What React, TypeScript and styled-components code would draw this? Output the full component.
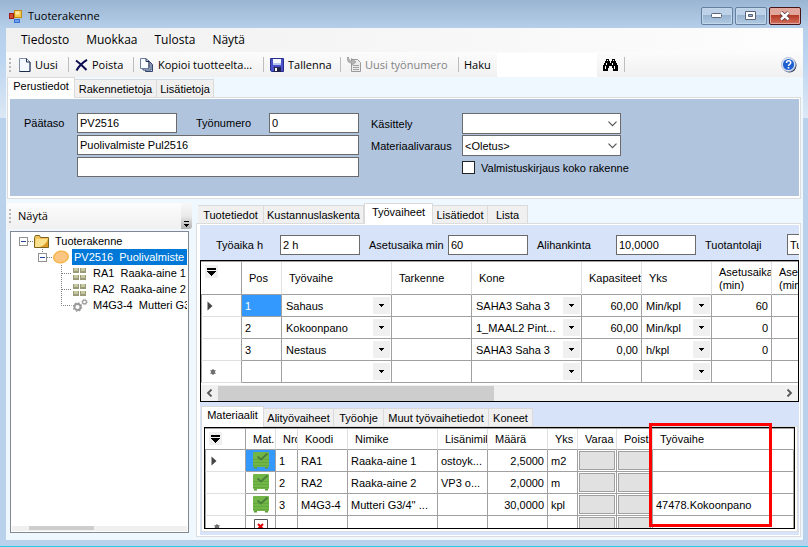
import React from 'react';
import styled, { createGlobalStyle, css } from 'styled-components';

const UI = '"Liberation Sans", Arial, sans-serif';
const CHROME = '"Open Sans", "Noto Sans", sans-serif';

const GlobalStyle = createGlobalStyle`
  *, *::before, *::after { box-sizing: border-box; }
  body { margin: 0; }
  button, input, select { font: inherit; color: inherit; margin: 0; }
  svg { display: block; flex: none; }
`;

const Window = styled.div`
  display: flex;
  flex-direction: column;
  height: 100vh;
  padding: 0 5px 6px 6px;
  overflow: hidden;
  border-bottom: 1px solid #1fd0e8;
  background:
    linear-gradient(#9ab5d2 0, #b5cee9 28px, #bcd5f0 60px, #dce8f5 118px) top / 100% 118px no-repeat,
    #b9d1ea;
  font: 11px/16px ${UI};
  color: #000;
`;

/* Title bar */
const TitleBar = styled.header`
  display: flex;
  flex: none;
  align-items: center;
  height: 28px;
  padding: 4px 2px 0 3px;
  gap: 6px;
  font: 11px/16px ${CHROME};
`;
const Title = styled.h1`
  flex: 1;
  margin: 0;
  font: inherit;
`;
const Caption = styled.div`
  display: flex;
  gap: 2px;
`;
const CaptionButton = styled.button<{ $close?: boolean }>`
  display: flex;
  align-items: center;
  justify-content: center;
  width: 32px;
  height: 18px;
  padding: 0;
  border: 1px solid ${p => (p.$close ? '#431418' : '#657fa0')};
  border-radius: 2px;
  box-shadow: inset 0 0 0 1px ${p => (p.$close ? '#e3a79d' : '#c3d7ea')};
  background: ${p =>
    p.$close
      ? 'linear-gradient(#e2a79c 0 45%, #b53a24 46%, #d2705c)'
      : 'linear-gradient(#bdd2e8 0 45%, #98b4d0 46%, #b2cae4)'};
`;

const Client = styled.main`
  display: flex;
  flex: 1;
  flex-direction: column;
  min-height: 0;
  background: #f0f8ff;
`;

/* Menu and toolbar */
const MenuBar = styled.nav`
  display: flex;
  flex: none;
  align-items: center;
  gap: 17px;
  height: 24px;
  padding-left: 15px;
  background: linear-gradient(90deg, #f0f0f0, #fdfdfd);
  font: 12px/16px ${CHROME};
`;
const MenuItem = styled.button`
  padding: 0;
  border: 0;
  background: none;
`;
const Toolbar = styled.div`
  display: flex;
  flex: none;
  align-items: center;
  height: 25px;
  padding: 0 6px 0 3px;
  background: linear-gradient(#fcfcfc, #f0f0f0);
  font: 11px/16px ${CHROME};
`;
const Grip = styled.span`
  flex: none;
  width: 2px;
  height: 14px;
  background: repeating-linear-gradient(#b9b9b9 0 2px, transparent 2px 4px);
`;
const ToolButton = styled.button<{ $w: number; $first?: boolean }>`
  display: flex;
  flex: none;
  align-items: center;
  gap: 4px;
  width: ${p => p.$w}px;
  padding: 0 0 0 ${p => (p.$first ? 8 : 6)}px;
  border: 0;
  background: none;
  white-space: nowrap;
  &:disabled { color: #838383; }
`;
const Separator = styled.span`
  flex: none;
  width: 1px;
  height: 15px;
  background: #bdbdbd;
`;
const SearchLabel = styled.label`
  display: flex;
  align-items: center;
  gap: 6px;
  padding-left: 5px;
`;
const SearchInput = styled.input`
  width: 100px;
  height: 24px;
  border: 0;
  background: #fff;
`;
const Spacer = styled.span`
  flex: 1;
`;

/* Tabs */
const TabStrip = styled.div<{ $indent?: number }>`
  display: flex;
  flex: none;
  align-items: flex-end;
  height: 20px;
  padding-left: ${p => p.$indent ?? 0}px;
`;
const Tab = styled.button<{ $w: number }>`
  flex: none;
  width: ${p => p.$w}px;
  height: 18px;
  padding: 0;
  border: 1px solid #dadada;
  border-width: 1px 1px 0 0;
  background: #f0f0f0;
  white-space: nowrap;
  line-height: 18px;
  &[aria-selected='true'] {
    position: relative;
    height: 21px;
    margin-bottom: -1px;
    border-left-width: 1px;
    background: #fff;
    line-height: 17px;
    padding-bottom: 3px;
  }
`;

const TopPanel = styled.section`
  flex: none;
  margin: 0 2px 0 1px;
  padding: 1px 1px 2px 2px;
  border: 1px solid #dcdcdc;
  background: #fff;
`;
const Form = styled.form`
  display: flex;
  gap: 12px;
  padding: 14px 14px 18px;
  background: #b0c4de;
`;
const ItemFields = styled.div`
  display: grid;
  grid-template-columns: 53px 100px 92px 90px;
  grid-auto-rows: 20px;
  row-gap: 2px;
  align-items: center;
`;
const OptionFields = styled.div`
  display: grid;
  grid-template-columns: 91px 159px;
  grid-auto-rows: 21px;
  row-gap: 1px;
  align-items: center;
`;
const Label = styled.label<{ $indent?: number }>`
  padding-left: ${p => p.$indent ?? 0}px;
  white-space: nowrap;
`;
const TextInput = styled.input<{ $wide?: boolean }>`
  width: 100%;
  min-width: 0;
  height: 20px;
  padding: 0 2px;
  border: 1px solid #6b6b6b;
  border-radius: 0;
  background: #fff;
  ${p => p.$wide && css`grid-column: 2 / 5;`}
`;
const Combo = styled.span`
  display: grid;
  align-items: center;
  min-width: 0;
  > * { grid-area: 1 / 1; }
  > svg { justify-self: end; margin-right: 4px; pointer-events: none; }
`;
const Select = styled.select`
  width: 100%;
  height: 21px;
  padding: 0 2px;
  appearance: none;
  border: 1px solid #6b6b6b;
  border-radius: 0;
  background: #fff;
`;
const CheckLabel = styled.label`
  display: flex;
  grid-column: 2;
  align-items: center;
  gap: 6px;
  white-space: nowrap;
`;
const CheckBox = styled.input`
  flex: none;
  width: 13px;
  height: 13px;
  appearance: none;
  border: 1px solid #222;
  background: #fff;
`;

/* Lower area */
const Split = styled.div`
  display: flex;
  flex: 1;
  gap: 4px;
  min-height: 0;
  padding: 4px 2px 3px 1px;
`;
const Sidebar = styled.aside`
  display: flex;
  flex: none;
  flex-direction: column;
  width: 185px;
`;
const SideBarStrip = styled.div`
  display: flex;
  flex: none;
  align-items: center;
  gap: 7px;
  height: 26px;
  padding-left: 2px;
  border-radius: 0 3px 3px 0;
  background: linear-gradient(#fcfcfc, #f0f0f0);
  font: 11px/16px ${CHROME};
`;
const Overflow = styled.button`
  display: flex;
  align-items: flex-end;
  justify-content: center;
  width: 11px;
  height: 26px;
  margin-left: auto;
  padding: 0 0 2px;
  border: 0;
  border-radius: 0 3px 3px 0;
  background: linear-gradient(#f8f8f8, #eaeaea 50%, #b0b0b0);
`;
const TreeBox = styled.div`
  display: flex;
  flex: 1;
  flex-direction: column;
  min-height: 0;
  margin: 2px 3px 4px;
  padding: 1px;
  border: 1px solid #828790;
  background: #fff;
`;
const Tree = styled.ul`
  flex: 1;
  margin: 0;
  padding: 0;
  overflow: hidden;
  list-style: none;
`;
const Node = styled.li`
  display: flex;
  align-items: center;
  height: 16px;
  white-space: pre;
`;
const NodeText = styled.span<{ $selected?: boolean; $gap: number }>`
  flex: 1;
  margin-left: ${p => p.$gap}px;
  padding-left: 2px;
  overflow: hidden;
  ${p => p.$selected && css`background: #0078d7; color: #fff;`}
`;
const TreeScroll = styled.div`
  flex: none;
  height: 5px;
  padding: 0 0 1px 17px;
  background: #f0f0f0;
`;
const TreeThumb = styled.div`
  width: 41%;
  height: 4px;
  background: #cdcdcd;
`;

const Detail = styled.div`
  display: flex;
  flex: 1;
  flex-direction: column;
  min-width: 0;
`;
const DetailPanel = styled.section`
  display: flex;
  flex: 1;
  flex-direction: column;
  min-height: 0;
  padding: 1px 1px 1px 3px;
  border: 1px solid #dcdcdc;
  background: #fff;
`;
const PhasePanel = styled.div`
  display: flex;
  flex: 1;
  flex-direction: column;
  min-height: 0;
  padding-bottom: 3px;
  background: #d6e3f8;
`;
const PhaseFields = styled.div`
  display: grid;
  flex: none;
  grid-template-columns: 64px 80px 88px 80px 88px 80px 91px 80px;
  align-items: center;
  height: 35px;
  padding: 9px 0 6px 16px;
  overflow: hidden;
`;

/* Grids */
const GridFrame = styled.div<{ $fill?: boolean }>`
  flex: ${p => (p.$fill ? '1' : 'none')};
  min-height: 0;
  overflow: hidden;
  border: 1px solid #000;
  background: #fff;
`;
const Table = styled.table`
  width: 0;
  table-layout: fixed;
  border-spacing: 0;
  border-top: 1px solid #a0a0a0;
`;
const HeadCell = styled.th<{ $h: number }>`
  height: ${p => p.$h}px;
  padding: 1px 0 0 7px;
  overflow: hidden;
  border-right: 1px solid #e0e0e0;
  border-bottom: 1px solid #a0a0a0;
  font-weight: normal;
  line-height: 13px;
  text-align: left;
  white-space: nowrap;
`;
const CornerCell = styled(HeadCell)`
  padding: 3px 0 0 4px;
  border-right-color: #a0a0a0;
  vertical-align: top;
`;
const RowHead = styled.th`
  height: 22px;
  padding: 0 0 0 5px;
  border-right: 1px solid #a0a0a0;
  border-bottom: 1px solid #e0e0e0;
  border-left: 1px solid #a0a0a0;
`;
const Cell = styled.td<{ $num?: boolean; $selected?: boolean; $tight?: boolean }>`
  height: 22px;
  padding: ${p => (p.$tight ? '0' : '0 3px')};
  overflow: hidden;
  border-right: 1px solid #a0a0a0;
  border-bottom: 1px solid #a0a0a0;
  line-height: 16px;
  text-align: ${p => (p.$num ? 'right' : 'left')};
  white-space: nowrap;
  ${p => p.$selected && css`background: #3399ff; color: #fff;`}
`;
const CellSelect = styled.select`
  width: 100%;
  height: 21px;
  padding: 0 18px 0 4px;
  appearance: none;
  border: 0;
  background: none;
`;
const CellArrow = styled.span`
  display: flex;
  align-items: center;
  justify-content: center;
  justify-self: end;
  width: 17px;
  height: 17px;
  margin-right: 1px;
  background: #f0f0f0;
  pointer-events: none;
`;
const IconBox = styled.span`
  display: flex;
  justify-content: center;
`;
const CellButton = styled.button`
  display: block;
  width: calc(100% - 2px);
  height: 19px;
  margin: 0 1px;
  padding: 0;
  border: 1px solid #a0a0a0;
  background: #e1e1e1;
`;
const CornerMark = styled.span`
  display: flex;
  width: 13px;
  height: 13px;
  align-items: center;
  justify-content: center;
  background: #f0f0f0;
`;
const ScrollBar = styled.div`
  display: flex;
  align-items: center;
  height: 16px;
  margin-top: 2px;
  background: #f0f0f0;
`;
const ScrollButton = styled.button`
  display: flex;
  flex: none;
  align-items: center;
  justify-content: center;
  width: 17px;
  height: 16px;
  padding: 0;
  border: 0;
  background: none;
`;
const ScrollTrack = styled.div`
  flex: 1;
`;
const ScrollThumb = styled.div`
  width: 49%;
  height: 15px;
  background: #cdcdcd;
`;

const MaterialArea = styled.div`
  position: relative;
  display: flex;
  flex: 1;
  flex-direction: column;
  min-height: 0;
  margin: 4px 1px 0;
`;
const MaterialPanel = styled.div`
  display: flex;
  flex: 1;
  flex-direction: column;
  min-height: 0;
  padding: 0 2px 2px;
  border: 1px solid #dcdcdc;
  background: #fff;
`;
const Highlight = styled.div`
  position: absolute;
  top: 17px;
  right: 26px;
  bottom: 5px;
  width: 123px;
  border: 3px solid #f00;
  pointer-events: none;
`;

/* Icons */
const AppIcon = () => (
  <svg width="13" height="13" viewBox="0 0 13 13">
    <rect x="5.5" y=".5" width="7" height="7" fill="#f7c94b" stroke="#c08a14" />
    <rect x="6.5" y="1.5" width="4" height="3" fill="#fde9a5" />
    <rect x=".5" y="3.5" width="4" height="5" fill="#d04a38" stroke="#a51a10" />
    <rect x="5.5" y="9.5" width="5" height="3" fill="#6ea0f0" stroke="#3b6fd0" />
  </svg>
);
const PageIcon = () => (
  <svg width="12" height="14" viewBox="0 0 12 14">
    <path d="M.5.5h7L11 4v9.5H.5z" fill="#f4f8ff" stroke="#8490a8" />
    <path d="M7.5.5V4H11v9.5H.5" fill="none" stroke="#1e2c50" />
  </svg>
);
const CrossIcon = () => (
  <svg width="13" height="12" viewBox="0 0 13 12">
    <path d="M1 1.5Q6 5 11.5 11M12 .8Q5 5 1.5 11.5" fill="none" stroke="#0c0c50" strokeWidth="2" />
  </svg>
);
const CopyIcon = () => (
  <svg width="14" height="14" viewBox="0 0 14 14">
    <path d="M5.5 3.5h4l3 3v7h-7z" fill="#c9d5ea" stroke="#34466e" />
    <path d="M3 2h5l3 3v7H3z" fill="#dce6f6" stroke="#34466e" />
    <path d="M.5.5H6l3 3v7H.5z" fill="#fafcff" stroke="#6f7f9e" />
    <path d="M6 .5v3h3v7" fill="none" stroke="#1e2c50" />
  </svg>
);
const SaveIcon = () => (
  <svg width="14" height="14" viewBox="0 0 14 14">
    <path d="M.5.5h13v13h-12l-1-1z" fill="#4a50c8" stroke="#2a2f8c" />
    <rect x="3" y="1" width="8" height="6" fill="#f3f6ff" />
    <rect x="3" y="5" width="8" height="2" fill="#b8c8f0" />
    <rect x="4" y="9" width="7" height="5" fill="#20244a" />
    <rect x="5" y="10" width="2" height="3" fill="#fff" />
  </svg>
);
const WorkIcon = () => (
  <svg width="14" height="15" viewBox="0 0 14 15">
    <path d="M4.500 2.500h6l3 3v9h-9z" fill="#ececec" stroke="#9a9a9a" />
    <path d="M6 8.500h6M6 10.500h6M6 12.500h6" stroke="#a0a0a0" />
    <path d="M.5 0q-1 6 4 6v2.500L9 5 4.500 1.500V4Q1.500 4 1.500 0z" fill="#b4b4b4" stroke="#8c8c8c" strokeWidth=".6" />
  </svg>
);
const FindIcon = () => (
  <svg width="15" height="12" viewBox="0 0 15 12" shapeRendering="crispEdges">
    <path d="M3 0h3v2h1v2h1V2h1V0h3v2h1v2h1v2h1v6h-5V9H9V7H6v2H5v3H0V6h1V4h1V2h1z" fill="#000" />
    <path d="M4 1h1v1H4zM10 1h1v1h-1zM3 4h1v2H3zM9 4h1v2H9zM2 7h1v3H2zM11 7h1v3h-1z" fill="#fff" />
  </svg>
);
const HelpIcon = () => (
  <svg width="16" height="16" viewBox="0 0 16 16">
    <circle cx="8.5" cy="8.5" r="7" fill="#33405c" />
    <circle cx="7.5" cy="7.5" r="7" fill="#e8eefa" stroke="#9fb0d0" strokeWidth=".8" />
    <circle cx="7.5" cy="7.5" r="5.6" fill="#1f5fd0" />
    <path d="M5.5 6q0-2.200 2.100-2.200T9.700 5.800q0 1.100-1.100 1.600T7.500 9" fill="none" stroke="#fff" strokeWidth="1.5" />
    <rect x="6.7" y="10" width="1.6" height="1.6" fill="#fff" />
  </svg>
);
const Chevron = () => (
  <svg width="9" height="6" viewBox="0 0 9 6">
    <path d="M.5.7l4 4 4-4" fill="none" stroke="#555" strokeWidth="1.2" />
  </svg>
);
const DownTriangle = () => (
  <svg width="5" height="3" viewBox="0 0 5 3" shapeRendering="crispEdges">
    <path d="M0 0h5v1H4v1H3v1H2V2H1V1H0z" fill="#000" />
  </svg>
);
const ChooserIcon = () => (
  <svg width="9" height="8" viewBox="0 0 9 8" shapeRendering="crispEdges">
    <path d="M0 0h9v2H0zM0 3h9v1H8v1H7v1H6v1H5v1H4V7H3V6H2V5H1V4H0z" fill="#000" />
  </svg>
);
const OverflowIcon = () => (
  <svg width="6" height="6" viewBox="0 0 6 6" shapeRendering="crispEdges">
    <path d="M0 0h5v1H0zM0 3h5v1H4v1H3v1H2V5H1V4H0z" fill="#000" />
  </svg>
);
const CurrentRow = () => (
  <svg width="6" height="10" viewBox="0 0 6 10">
    <path d="M.5.5L5.500 5l-5 4.500z" fill="#444" />
  </svg>
);
const NewRow = () => (
  <svg width="12" height="7" viewBox="0 0 12 7">
    <circle cx="6" cy="4" r="2.2" fill="#555" />
    <path d="M6 1v6M3.300 2.500l5.400 3M8.700 2.500l-5.400 3" stroke="#777" />
  </svg>
);
const ScrollArrow = ({ right }: { right?: boolean }) => (
  <svg width="7" height="8" viewBox="0 0 7 8">
    <path d={right ? 'M1.5.5L5 4 1.5 7.5' : 'M5.5.5L2 4l3.5 3.5'} fill="none" stroke="#555" strokeWidth="1.8" />
  </svg>
);
const RootGuide = () => (
  <svg width="22" height="16" viewBox="0 0 22 16">
    <path d="M16 8.500h6" stroke="#808080" strokeDasharray="1 1" />
    <rect x="7.5" y="4.5" width="8" height="8" fill="#fff" stroke="#919191" />
    <path d="M9 8.500h5" stroke="#2848a0" />
  </svg>
);
const ItemGuide = () => (
  <svg width="41" height="16" viewBox="0 0 41 16">
    <path d="M30.500 0v4M35 8.500h6" stroke="#808080" strokeDasharray="1 1" />
    <rect x="26.5" y="4.5" width="8" height="8" fill="#fff" stroke="#919191" />
    <path d="M28 8.500h5" stroke="#2848a0" />
  </svg>
);
const LeafGuide = ({ last }: { last?: boolean }) => (
  <svg width="61" height="16" viewBox="0 0 61 16">
    <path d={last ? 'M49.5 0v8.5h10' : 'M49.5 0v16M50 8.5h10'} fill="none" stroke="#808080" strokeDasharray="1 1" />
  </svg>
);
const FolderIcon = () => (
  <svg width="15" height="13" viewBox="0 0 15 13">
    <path d="M.5 2.500l1-2h4l1 2h8v10H.5z" fill="#f2c35a" stroke="#7d6320" />
    <path d="M2 4h12v8H1z" fill="#fbe08d" />
    <path d="M6 12Q12 10 14 4v8z" fill="#dd9a26" />
  </svg>
);
const ProductIcon = () => (
  <svg width="16" height="14" viewBox="0 0 16 14">
    <ellipse cx="8" cy="7" rx="7.3" ry="5.8" fill="#fdc582" stroke="#f5b545" strokeWidth="1.4" transform="rotate(-10 8 7)" />
  </svg>
);
const PartsIcon = () => (
  <svg width="13" height="13" viewBox="0 0 13 13">
    <path d="M0 1h6v5H0zM7 1h6v5H7zM0 8h6v5H0zM7 8h6v5H7z" fill="#989a78" />
    <path d="M1 1h4v3H1zM8 1h4v3H8zM1 8h4v3H1zM8 8h4v3H8z" fill="#c6c8a0" />
  </svg>
);
const GearsIcon = () => (
  <svg width="15" height="14" viewBox="0 0 15 14">
    <circle cx="4.500" cy="9" r="3" fill="none" stroke="#999" strokeWidth="1.8" />
    <circle cx="4.500" cy="9" r="4.2" fill="none" stroke="#999" strokeWidth="1.2" strokeDasharray="1.6 1.7" />
    <circle cx="11.500" cy="4" r="1.9" fill="none" stroke="#999" strokeWidth="1.2" />
    <circle cx="11.500" cy="4" r="2.8" fill="none" stroke="#999" strokeWidth=".8" strokeDasharray="1 1.2" />
  </svg>
);
const StockIcon = () => (
  <svg width="16" height="17" viewBox="0 0 16 17">
    <rect x="0" y="0" width="16" height="15" rx="1" fill="#72b648" />
    <path d="M0 7.500h16M0 10.500h16M0 13.500h16" stroke="#62a83c" />
    <path d="M1 15h3v1.500H1zM12 15h3v1.500h-3z" fill="#5c9c38" />
    <path d="M4.500 4.500L8 7.500 14.500 1.500" fill="none" stroke="#4d7f3c" strokeWidth="2" />
  </svg>
);
const MissingIcon = () => (
  <svg width="14" height="16" viewBox="0 0 14 16">
    <path d="M.5 16V.5h13V16" fill="#fff" stroke="#555" />
    <path d="M4 5l5 5M9 5l-5 5" stroke="#e00000" strokeWidth="2" />
  </svg>
);

type TabDef = [label: string, width: number];
const Tabs = ({ items, active, indent, name }: { items: TabDef[]; active: number; indent?: number; name: string }) => (
  <TabStrip role="tablist" aria-label={name} $indent={indent}>
    {items.map(([label, w], i) => (
      <Tab key={label} type="button" role="tab" aria-selected={i === active} $w={w}>
        {label}
      </Tab>
    ))}
  </TabStrip>
);

const ComboCell = ({ value, name }: { value: string; name: string }) => (
  <Cell $tight>
    <Combo>
      <CellSelect aria-label={name} defaultValue={value}>
        <option>{value}</option>
      </CellSelect>
      <CellArrow>
        <DownTriangle />
      </CellArrow>
    </Combo>
  </Cell>
);

const PHASE_COLS = [41, 40, 110, 80, 110, 60, 70, 60, 60];
const PHASE_HEADS = ['Pos', 'Työvaihe', 'Tarkenne', 'Kone', 'Kapasiteetti', 'Yks'];
const PHASES = [
  { pos: '1', phase: 'Sahaus', machine: 'SAHA3 Saha 3', cap: '60,00', unit: 'Min/kpl', setup: '60' },
  { pos: '2', phase: 'Kokoonpano', machine: '1_MAAL2 Pint...', cap: '60,00', unit: 'Min/kpl', setup: '0' },
  { pos: '3', phase: 'Nestaus', machine: 'SAHA3 Saha 3', cap: '0,00', unit: 'h/kpl', setup: '0' },
  { pos: '', phase: '', machine: '', cap: '', unit: '', setup: '' },
];

const MATERIAL_COLS = [41, 30, 22, 50, 90, 50, 60, 30, 39, 36, 141];
const MATERIAL_HEADS = ['Mat.', 'Nro', 'Koodi', 'Nimike', 'Lisänimike', 'Määrä', 'Yks', 'Varaa', 'Poista', 'Työvaihe'];
const MATERIALS = [
  { no: '1', code: 'RA1', name: 'Raaka-aine 1', extra: 'ostoyk...', qty: '2,5000', unit: 'm2', phase: '' },
  { no: '2', code: 'RA2', name: 'Raaka-aine 2', extra: 'VP3 o...', qty: '2,0000', unit: 'm', phase: '' },
  { no: '3', code: 'M4G3-4', name: "Mutteri G3/4'' ...", extra: '', qty: '30,0000', unit: 'kpl', phase: '47478.Kokoonpano' },
  { no: '', code: '', name: '', extra: '', qty: '', unit: '', phase: '' },
];

const Columns = ({ widths }: { widths: number[] }) => (
  <colgroup>
    {widths.map((w, i) => (
      <col key={i} width={w} />
    ))}
  </colgroup>
);

const Corner = ({ h }: { h: number }) => (
  <CornerCell $h={h} aria-label="Sarakkeet">
    <CornerMark>
      <ChooserIcon />
    </CornerMark>
  </CornerCell>
);

const PhaseTable = () => (
  <GridFrame>
    <Table>
      <Columns widths={PHASE_COLS} />
      <thead>
        <tr>
          <Corner h={33} />
          {PHASE_HEADS.map(h => (
            <HeadCell key={h} $h={33}>{h}</HeadCell>
          ))}
          <HeadCell $h={33}>Asetusaika<br />(min)</HeadCell>
          <HeadCell $h={33}>Asetusaika<br />(min)</HeadCell>
        </tr>
      </thead>
      <tbody>
        {PHASES.map((r, i) => (
          <tr key={i}>
            <RowHead>{i === 0 ? <CurrentRow /> : i === 3 ? <NewRow /> : null}</RowHead>
            <Cell $selected={i === 0}>{r.pos}</Cell>
            <ComboCell value={r.phase} name="Työvaihe" />
            <Cell />
            <ComboCell value={r.machine} name="Kone" />
            <Cell $num>{r.cap}</Cell>
            <ComboCell value={r.unit} name="Yks" />
            <Cell $num>{r.setup}</Cell>
            <Cell />
          </tr>
        ))}
      </tbody>
    </Table>
    <ScrollBar>
      <ScrollButton type="button" aria-label="Vasemmalle"><ScrollArrow /></ScrollButton>
      <ScrollTrack><ScrollThumb /></ScrollTrack>
      <ScrollButton type="button" aria-label="Oikealle"><ScrollArrow right /></ScrollButton>
    </ScrollBar>
  </GridFrame>
);

const MaterialTable = () => (
  <GridFrame $fill>
    <Table>
      <Columns widths={MATERIAL_COLS} />
      <thead>
        <tr>
          <Corner h={21} />
          {MATERIAL_HEADS.map(h => (
            <HeadCell key={h} $h={21}>{h}</HeadCell>
          ))}
        </tr>
      </thead>
      <tbody>
        {MATERIALS.map((r, i) => (
          <tr key={i}>
            <RowHead>{i === 0 ? <CurrentRow /> : i === 3 ? <NewRow /> : null}</RowHead>
            <Cell $tight $selected={i === 0}>
              <IconBox>{i < 3 ? <StockIcon /> : <MissingIcon />}</IconBox>
            </Cell>
            <Cell>{r.no}</Cell>
            <Cell>{r.code}</Cell>
            <Cell>{r.name}</Cell>
            <Cell>{r.extra}</Cell>
            <Cell $num>{r.qty}</Cell>
            <Cell>{r.unit}</Cell>
            <Cell $tight><CellButton type="button" aria-label="Varaa" /></Cell>
            <Cell $tight><CellButton type="button" aria-label="Poista" /></Cell>
            <Cell>{r.phase}</Cell>
          </tr>
        ))}
      </tbody>
    </Table>
  </GridFrame>
);

export default function App() {
  return (
    <>
      <GlobalStyle />
      <Window>
        <TitleBar>
          <AppIcon />
          <Title>Tuoterakenne</Title>
          <Caption>
            <CaptionButton type="button" aria-label="Pienennä">
              <svg width="12" height="6" viewBox="0 0 12 6"><rect x=".5" y=".5" width="10" height="4" rx="1" fill="#fff" stroke="#596478" /></svg>
            </CaptionButton>
            <CaptionButton type="button" aria-label="Suurenna">
              <svg width="12" height="10" viewBox="0 0 12 10"><path d="M.5.5h10v8H.5zM3.500 3.500v2h4v-2z" fill="#fff" fillRule="evenodd" stroke="#596478" /></svg>
            </CaptionButton>
            <CaptionButton type="button" aria-label="Sulje" $close>
              <svg width="12" height="10" viewBox="0 0 12 10">
                <path d="M2 1.500l7.500 7M9.500 1.500L2 8.500" stroke="#5a3a40" strokeWidth="4" />
                <path d="M2 1.500l7.500 7M9.500 1.500L2 8.500" stroke="#fff" strokeWidth="2.4" />
              </svg>
            </CaptionButton>
          </Caption>
        </TitleBar>
        <Client>
          <MenuBar>
            {['Tiedosto', 'Muokkaa', 'Tulosta', 'Näytä'].map(m => (
              <MenuItem key={m} type="button">{m}</MenuItem>
            ))}
          </MenuBar>
          <Toolbar role="toolbar">
            <Grip />
            <ToolButton type="button" $w={57} $first><PageIcon />Uusi</ToolButton>
            <Separator />
            <ToolButton type="button" $w={64}><CrossIcon />Poista</ToolButton>
            <Separator />
            <ToolButton type="button" $w={129}><CopyIcon />Kopioi tuotteelta...</ToolButton>
            <Separator />
            <ToolButton type="button" $w={76}><SaveIcon />Tallenna</ToolButton>
            <Separator />
            <ToolButton type="button" $w={117} disabled><WorkIcon />Uusi työnumero</ToolButton>
            <Separator />
            <SearchLabel>Haku<SearchInput type="text" /></SearchLabel>
            <ToolButton type="button" $w={27} aria-label="Etsi"><FindIcon /></ToolButton>
            <Separator />
            <Spacer />
            <ToolButton type="button" $w={22} aria-label="Ohje"><HelpIcon /></ToolButton>
          </Toolbar>
          <Tabs name="Tuote" indent={1} active={0} items={[['Perustiedot', 68], ['Rakennetietoja', 82], ['Lisätietoja', 57]]} />
          <TopPanel>
            <Form>
              <ItemFields>
                <Label htmlFor="level">Päätaso</Label>
                <TextInput id="level" defaultValue="PV2516" />
                <Label htmlFor="work" $indent={19}>Työnumero</Label>
                <TextInput id="work" defaultValue="0" />
                <TextInput $wide aria-label="Nimi" defaultValue="Puolivalmiste Pul2516" />
                <TextInput $wide aria-label="Lisänimi" />
              </ItemFields>
              <OptionFields>
                <Label htmlFor="handling">Käsittely</Label>
                <Combo>
                  <Select id="handling"><option /></Select>
                  <Chevron />
                </Combo>
                <Label htmlFor="reserve">Materiaalivaraus</Label>
                <Combo>
                  <Select id="reserve"><option>&lt;Oletus&gt;</option></Select>
                  <Chevron />
                </Combo>
                <CheckLabel><CheckBox type="checkbox" />Valmistuskirjaus koko rakenne</CheckLabel>
              </OptionFields>
            </Form>
          </TopPanel>
          <Split>
            <Sidebar>
              <SideBarStrip>
                <Grip />
                Näytä
                <Overflow type="button" aria-label="Lisää"><OverflowIcon /></Overflow>
              </SideBarStrip>
              <TreeBox>
                <Tree role="tree">
                  <Node role="treeitem"><RootGuide /><FolderIcon /><NodeText $gap={4}>Tuoterakenne</NodeText></Node>
                  <Node role="treeitem" aria-selected><ItemGuide /><ProductIcon /><NodeText $gap={3} $selected>PV2516  Puolivalmiste Pul2516</NodeText></Node>
                  <Node role="treeitem"><LeafGuide /><PartsIcon /><NodeText $gap={5}>RA1  Raaka-aine 1</NodeText></Node>
                  <Node role="treeitem"><LeafGuide /><PartsIcon /><NodeText $gap={5}>RA2  Raaka-aine 2</NodeText></Node>
                  <Node role="treeitem"><LeafGuide last /><GearsIcon /><NodeText $gap={3}>M4G3-4  Mutteri G3/4''</NodeText></Node>
                </Tree>
                <TreeScroll><TreeThumb /></TreeScroll>
              </TreeBox>
            </Sidebar>
            <Detail>
              <Tabs
                name="Rakenne"
                indent={2}
                active={2}
                items={[['Tuotetiedot', 66], ['Kustannuslaskenta', 100], ['Työvaiheet', 69], ['Lisätiedot', 55], ['Lista', 40]]}
              />
              <DetailPanel>
                <PhasePanel>
                  <PhaseFields>
                    <Label htmlFor="time">Työaika h</Label>
                    <TextInput id="time" defaultValue="2 h" />
                    <Label htmlFor="setup" $indent={9}>Asetusaika min</Label>
                    <TextInput id="setup" defaultValue="60" />
                    <Label htmlFor="sub" $indent={9}>Alihankinta</Label>
                    <TextInput id="sub" defaultValue="10,0000" />
                    <Label htmlFor="kind" $indent={9}>Tuotantolaji</Label>
                    <Select id="kind"><option>Tuotanto</option></Select>
                  </PhaseFields>
                  <PhaseTable />
                  <MaterialArea>
                    <Tabs
                      name="Työvaihe"
                      active={0}
                      items={[['Materiaalit', 63], ['Alityövaiheet', 70], ['Työohje', 50], ['Muut työvaihetiedot', 105], ['Koneet', 44]]}
                    />
                    <MaterialPanel>
                      <MaterialTable />
                    </MaterialPanel>
                    <Highlight />
                  </MaterialArea>
                </PhasePanel>
              </DetailPanel>
            </Detail>
          </Split>
        </Client>
      </Window>
    </>
  );
}
